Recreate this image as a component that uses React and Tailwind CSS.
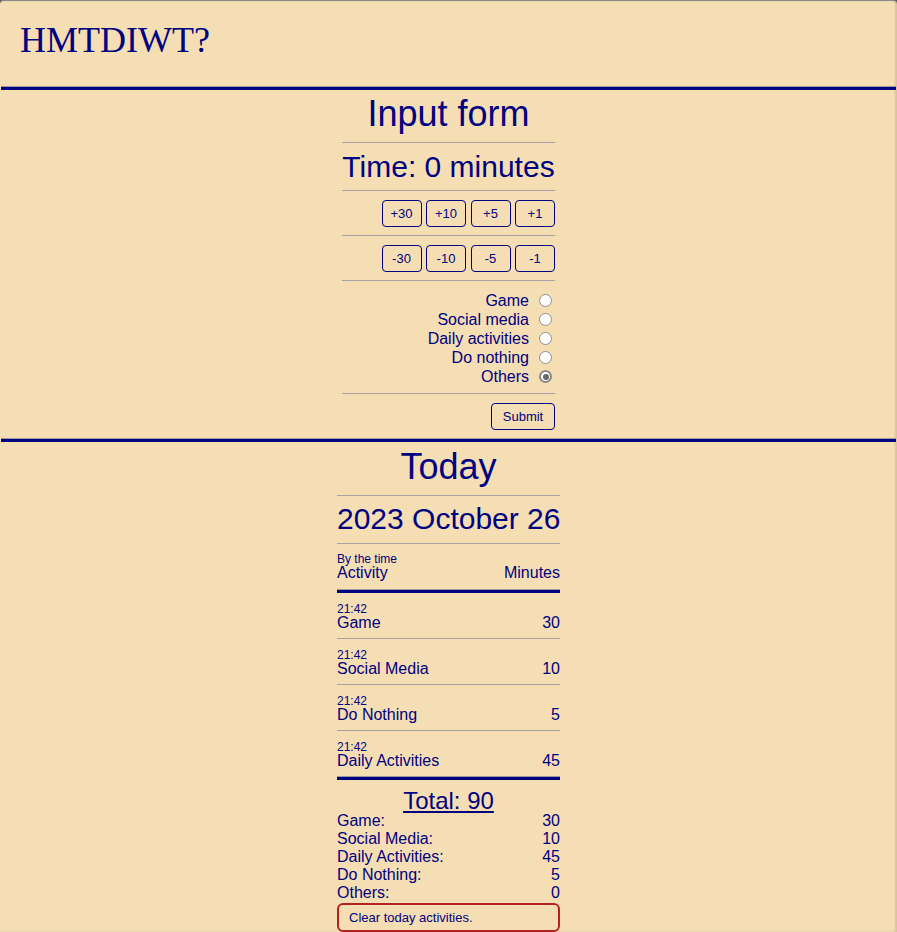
import React from 'react'

const NAVY = 'text-[#000080]'

const ThickRule = () => (
  <div className="mx-[1px] border-t border-[#9a9a9a]">
    <div className="h-[3px] bg-[#000080]" />
  </div>
)

const Rule = () => <div className="h-px bg-[#a4a4a4]" />

const StepButton = ({ label }) => (
  <button className="w-[40px] h-[27px] rounded-[4px] border border-[#000080] text-[13px] text-[#000080] flex items-center justify-center">
    {label}
  </button>
)

const Radio = ({ label, checked }) => (
  <div className="flex justify-end items-center h-[19px]">
    <span className="text-[16px] leading-[19px]">{label}</span>
    <span
      className={`ml-[10px] mr-[3px] w-[13px] h-[13px] rounded-full bg-white flex items-center justify-center ${
        checked ? 'border-2 border-[#8a8a8a]' : 'border border-[#8f8f8f]'
      }`}
    >
      {checked && <span className="w-[6px] h-[6px] rounded-full bg-[#6a6a6a]" />}
    </span>
  </div>
)

const entries = [
  { time: '21:42', name: 'Game', min: 30 },
  { time: '21:42', name: 'Social Media', min: 10 },
  { time: '21:42', name: 'Do Nothing', min: 5 },
  { time: '21:42', name: 'Daily Activities', min: 45 },
]

const totals = [
  ['Game:', 30],
  ['Social Media:', 10],
  ['Daily Activities:', 45],
  ['Do Nothing:', 5],
  ['Others:', 0],
]

export default function App() {
  return (
    <div className="min-h-screen bg-[#5a5a5a]">
      <div
        className={`min-h-[932px] bg-[#f5deb3] rounded-t-[4px] border-t border-[#8a8a8a] shadow-[inset_-2px_0_2px_rgba(0,0,0,0.12)] ${NAVY}`}
        style={{ fontFamily: '"Liberation Sans", Arial, sans-serif' }}
      >
        {/* Header */}
        <div className="h-[85px] pt-[19px] pl-[20px]">
          <div
            className="text-[36px] leading-[40px]"
            style={{ fontFamily: '"Liberation Serif", "Times New Roman", serif' }}
          >
            HMTDIWT?
          </div>
        </div>

        <ThickRule />

        {/* Input form */}
        <div className="w-[213px] mx-auto">
          <h1 className="mt-[4px] text-[36px] leading-[40px] text-center">Input form</h1>
          <div className="mt-[8px]">
            <Rule />
          </div>
          <div className="mt-[7px] text-[30px] leading-[34px] text-center whitespace-nowrap">
            Time: 0 minutes
          </div>
          <div className="mt-[6px]">
            <Rule />
          </div>
          <div className="mt-[9px] flex justify-end gap-[4.5px]">
            {['+30', '+10', '+5', '+1'].map((b) => (
              <StepButton key={b} label={b} />
            ))}
          </div>
          <div className="mt-[8px]">
            <Rule />
          </div>
          <div className="mt-[9px] flex justify-end gap-[4.5px]">
            {['-30', '-10', '-5', '-1'].map((b) => (
              <StepButton key={b} label={b} />
            ))}
          </div>
          <div className="mt-[8px]">
            <Rule />
          </div>
          <div className="mt-[10px]">
            <Radio label="Game" />
            <Radio label="Social media" />
            <Radio label="Daily activities" />
            <Radio label="Do nothing" />
            <Radio label="Others" checked />
          </div>
          <div className="mt-[7px]">
            <Rule />
          </div>
          <div className="mt-[9px] flex justify-end">
            <button className="w-[64px] h-[27px] rounded-[4px] border border-[#000080] text-[13px] text-[#000080]">
              Submit
            </button>
          </div>
        </div>

        <div className="mt-[8px]">
          <ThickRule />
        </div>

        {/* Today */}
        <div className="w-[223px] mx-auto">
          <h2 className="mt-[5px] text-[36px] leading-[40px] text-center">Today</h2>
          <div className="mt-[8px]">
            <Rule />
          </div>
          <div className="mt-[6px] text-[30px] leading-[34px] text-center whitespace-nowrap">
            2023 October 26
          </div>
          <div className="mt-[7px]">
            <Rule />
          </div>

          <div className="mt-[10px]">
            <div className="text-[12px] leading-[10px]">By the time</div>
            <div className="flex justify-between text-[16px] leading-[17px]">
              <span>Activity</span>
              <span>Minutes</span>
            </div>
          </div>
          <div className="mt-[8px] border-t border-[#9a9a9a]">
            <div className="h-[3px] bg-[#000080]" />
          </div>

          {entries.map((e, i) => (
            <div
              key={i}
              className={`pt-[11px] pb-[7px] ${i < entries.length - 1 ? 'border-b border-[#a4a4a4]' : ''}`}
            >
              <div className="text-[12px] leading-[11px]">{e.time}</div>
              <div className="flex justify-between text-[16px] leading-[16px]">
                <span>{e.name}</span>
                <span>{e.min}</span>
              </div>
            </div>
          ))}
          <div className="border-t border-[#9a9a9a]">
            <div className="h-[3px] bg-[#000080]" />
          </div>

          <div className="mt-[10px] text-center text-[24px] leading-[22px]">
            <span className="underline underline-offset-[2px]">Total: 90</span>
          </div>
          <div>
            {totals.map(([k, v]) => (
              <div key={k} className="flex justify-between text-[16px] leading-[18px]">
                <span>{k}</span>
                <span>{v}</span>
              </div>
            ))}
          </div>
          <button className="mt-[1px] w-full h-[29px] pl-[10px] flex items-center rounded-[6px] border-2 border-[#b22222] text-[13px] text-[#000080]">
            Clear today activities.
          </button>
        </div>
      </div>
    </div>
  )
}
